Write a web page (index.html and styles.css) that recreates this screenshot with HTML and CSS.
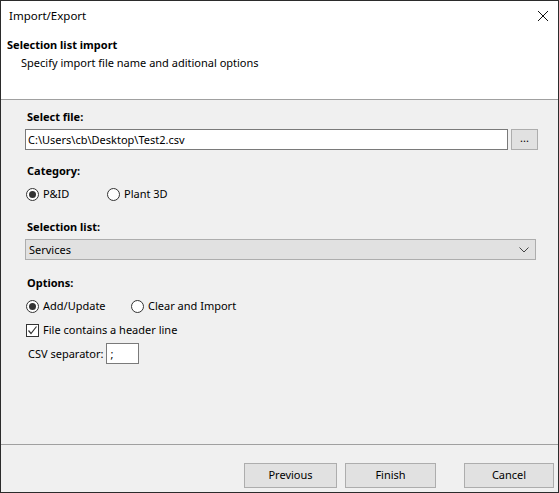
FILE: index.html
```html
<!DOCTYPE html>
<html>
<head>
<meta charset="utf-8">
<link rel="stylesheet" href="styles.css">
</head>
<body>
<div class="window">
  <div class="header">
    <div class="titlebar">
      <span class="title">Import/Export</span>
      <svg class="close" width="12" height="12" viewBox="0 0 12 12"><path d="M1 1L11 11M11 1L1 11" stroke="#111" stroke-width="1"/></svg>
    </div>
    <div class="heading">Selection list import</div>
    <div class="subheading">Specify import file name and aditional options</div>
  </div>
  <div class="body">
    <div class="label first">Select file:</div>
    <div class="filerow">
      <div class="textbox">C:\Users\cb\Desktop\Test2.csv</div>
      <div class="browse">...</div>
    </div>
    <div class="label sect">Category:</div>
    <div class="optrow">
      <span class="opt opt-a"><span class="radio checked"></span>P&amp;ID</span>
      <span class="opt"><span class="radio"></span>Plant 3D</span>
    </div>
    <div class="label sect2">Selection list:</div>
    <div class="combo">
      <span>Services</span>
      <svg class="chev" width="10" height="6" viewBox="0 0 10 6"><path d="M0.5 0.5L5 5L9.5 0.5" stroke="#444" fill="none" stroke-width="1"/></svg>
    </div>
    <div class="label sect3">Options:</div>
    <div class="optrow">
      <span class="opt opt-b"><span class="radio checked"></span>Add/Update</span>
      <span class="opt"><span class="radio"></span>Clear and Import</span>
    </div>
    <div class="optrow check-row">
      <span class="opt"><span class="checkbox"><svg width="11" height="11" viewBox="0 0 11 11"><path d="M1.5 5.5L4 8.5L9.5 1.5" stroke="#333" fill="none" stroke-width="1.2"/></svg></span>File contains a header line</span>
    </div>
    <div class="csvrow">
      <span class="csvlabel">CSV separator:</span>
      <div class="csvbox">;</div>
    </div>
  </div>
  <div class="footer">
    <div class="btn btn-prev">Previous</div>
    <div class="btn btn-finish">Finish</div>
    <div class="btn btn-cancel">Cancel</div>
  </div>
</div>
</body>
</html>
```
FILE: styles.css
```css
* { box-sizing: border-box; }
html, body { margin: 0; padding: 0; }
body {
  font-family: "Noto Sans", "Open Sans", sans-serif;
  font-size: 11px;
  color: #000;
  background: #f0f0f0;
}
.window {
  width: 559px;
  height: 493px;
  border: 1px solid #2b2b2b;
  display: flex;
  flex-direction: column;
  background: #f0f0f0;
}
.header {
  background: #fff;
  height: 99px;
  border-bottom: 1px solid #a0a0a0;
  flex: none;
}
.titlebar {
  height: 30px;
  display: flex;
  align-items: center;
  justify-content: space-between;
  padding: 0 9px 0 8px;
}
.title { line-height: 30px; font-size: 11.5px; }
.close { display: block; }
.heading {
  font-weight: bold;
  line-height: 18px;
  margin-top: 5px;
  padding-left: 6px;
}
.subheading {
  line-height: 18px;
  padding-left: 20px;
}
.body {
  flex: 1;
  padding: 8px 0 0 24px;
}
.label {
  font-weight: bold;
  line-height: 18px;
  padding-left: 2px;
}
.filerow {
  display: flex;
  margin-top: 3px;
  gap: 3px;
}
.textbox {
  width: 483px;
  height: 21px;
  border: 1px solid #7a7a7a;
  background: #fff;
  line-height: 19px;
  padding-left: 2px;
}
.browse {
  width: 27px;
  height: 21px;
  border: 1px solid #adadad;
  background: #e1e1e1;
  text-align: center;
  line-height: 16px;
  font-size: 11px;
}
.sect { margin-top: 12px; }
.sect2 { margin-top: 16px; }
.sect3 { margin-top: 14px; }
.optrow {
  display: flex;
  height: 16px;
  align-items: center;
  margin-top: 6px;
  padding-left: 1px;
}
.check-row { margin-top: 8px; }
.opt {
  display: inline-flex;
  align-items: center;
  line-height: 16px;
}
.opt-a { width: 81px; }
.opt-b { width: 105px; }
.radio {
  width: 13px;
  height: 13px;
  border: 1px solid #333;
  border-radius: 50%;
  background: #fff;
  margin-right: 4px;
  display: inline-flex;
  align-items: center;
  justify-content: center;
}
.radio.checked::after {
  content: "";
  width: 7px;
  height: 7px;
  border-radius: 50%;
  background: #333;
}
.checkbox {
  width: 13px;
  height: 13px;
  border: 1px solid #333;
  background: #fff;
  margin-right: 4px;
  display: inline-flex;
  align-items: center;
  justify-content: center;
}
.checkbox svg { display: block; }
.combo {
  width: 511px;
  height: 21px;
  margin-top: 3px;
  border: 1px solid #adadad;
  background: #e1e1e1;
  display: flex;
  align-items: center;
  justify-content: space-between;
  padding: 0 6px 0 3px;
}
.chev { display: block; }
.csvrow {
  display: flex;
  align-items: center;
  margin-top: 5px;
  padding-left: 3px;
  gap: 3px;
}
.csvbox {
  width: 33px;
  height: 21px;
  border: 1px solid #7a7a7a;
  background: #fff;
  line-height: 19px;
  padding-left: 3px;
}
.footer {
  height: 48px;
  flex: none;
  border-top: 1px solid #a0a0a0;
  display: flex;
  align-items: flex-start;
  padding: 18px 4px 0 0;
  justify-content: flex-end;
}
.btn {
  height: 25px;
  border: 1px solid #adadad;
  background: #e1e1e1;
  text-align: center;
  line-height: 22px;
}
.btn-prev { width: 93px; }
.btn-finish { width: 91px; margin-left: 8px; }
.btn-cancel { width: 90px; margin-left: 28px; }
```
